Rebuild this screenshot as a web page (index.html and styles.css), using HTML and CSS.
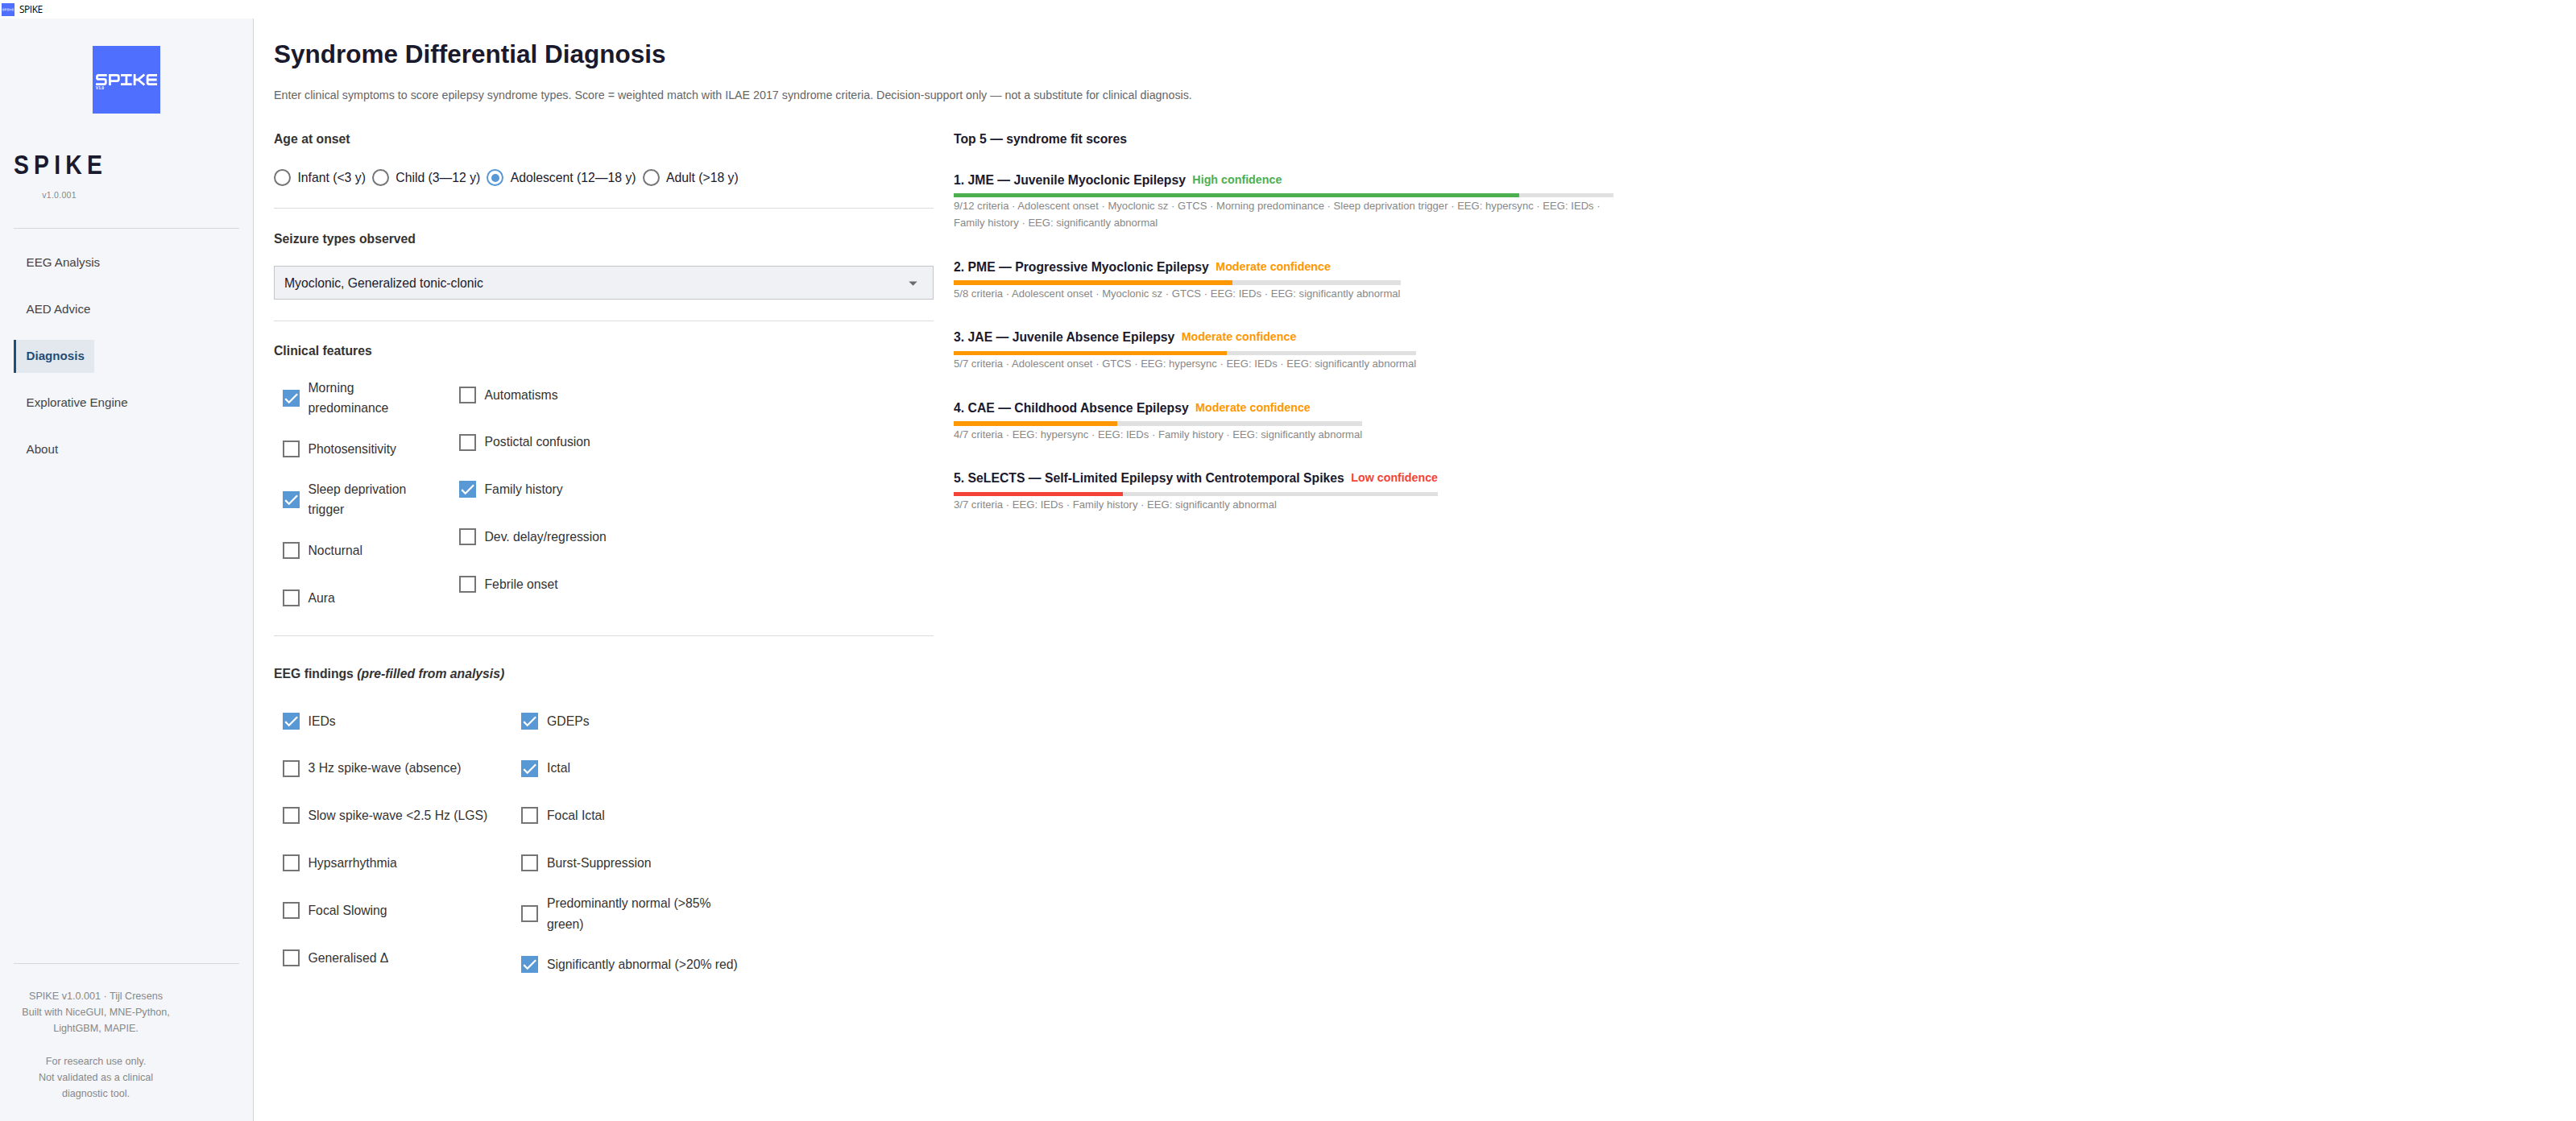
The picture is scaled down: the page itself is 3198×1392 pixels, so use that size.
FILE: index.html
```html
<!DOCTYPE html>
<html lang="en">
<head>
    <meta charset="UTF-8">
    <meta name="viewport" content="width=device-width, initial-scale=1.0">
    <title>SPIKE</title>
    <link rel="stylesheet" href="styles.css">
</head>
<body>

    <div class="titlebar">
        <svg class="titlebar-icon" viewBox="0 0 84 84"><rect width="84" height="84" fill="#4f6fff"/><use href="#wordmark"/></svg>
        <span>SPIKE</span>
    </div>

    <div class="app">
        <aside class="sidebar">
            <svg class="logo" viewBox="0 0 84 84">
                <rect width="84" height="84" fill="#4f6fff"/>
                <g id="wordmark" fill="none" stroke="#fff" stroke-width="2.8">
                    <path d="M17.7 36.4H7.4Q5.4 36.4 5.4 38.4V39.4Q5.4 41.4 7.4 41.4H14.3Q16.3 41.4 16.3 43.4V45.6Q16.3 47.6 14.3 47.6H4"/>
                    <path d="M21.4 49V36.4H30.3Q32.3 36.4 32.3 38.4V41.6Q32.3 43.6 30.3 43.6H21.4"/>
                    <path d="M35 36.4H48.7M41.9 36.4V47.6M35 47.6H48.7"/>
                    <path d="M52.1 35V49M52.1 42H56.5L64.3 35.5M56.5 42L64.3 48.5"/>
                    <path d="M80 36.4H70.1Q68.1 36.4 68.1 38.4V45.6Q68.1 47.6 70.1 47.6H80M68.1 42H79.6"/>
                </g>
                <text class="logo-version" x="3.8" y="54.4">V1.0</text>
            </svg>

            <div class="brand">
                <div class="brand-name">SPIKE</div>
                <div class="brand-version">v1.0.001</div>
            </div>

            <hr>

            <nav class="nav">
                <a class="nav-item">EEG Analysis</a>
                <a class="nav-item">AED Advice</a>
                <a class="nav-item active">Diagnosis</a>
                <a class="nav-item">Explorative Engine</a>
                <a class="nav-item">About</a>
            </nav>

            <div class="sidebar-footer">
                <hr>
                <p>SPIKE v1.0.001 · Tijl Cresens<br>Built with NiceGUI, MNE-Python,<br>LightGBM, MAPIE.<br><br>For research use only.<br>Not validated as a clinical<br>diagnostic tool.</p>
            </div>
        </aside>

        <main class="content">
            <h1>Syndrome Differential Diagnosis</h1>
            <p class="intro">Enter clinical symptoms to score epilepsy syndrome types. Score = weighted match with ILAE 2017 syndrome criteria. Decision-support only — not a substitute for clinical diagnosis.</p>

            <div class="columns">
                <section class="form">
                    <h2>Age at onset</h2>
                    <div class="radios">
                        <label class="radio"><i></i>Infant (&lt;3 y)</label>
                        <label class="radio"><i></i>Child (3—12 y)</label>
                        <label class="radio on"><i></i>Adolescent (12—18 y)</label>
                        <label class="radio"><i></i>Adult (&gt;18 y)</label>
                    </div>
                    <hr>

                    <h2>Seizure types observed</h2>
                    <div class="select">
                        <span>Myoclonic, Generalized tonic-clonic</span>
                        <svg class="arrow" viewBox="0 0 24 24"><path d="M7 10l5 5 5-5z" fill="#6b6b6b"/></svg>
                    </div>
                    <hr>

                    <h2 class="clinical-title">Clinical features</h2>
                    <div class="checks clinical">
                        <div class="check-col">
                            <label class="check on"><i><svg viewBox="0 0 24 24"><path id="tick" d="M1.73 12.91L8.1 19.28 22.79 4.59"/></svg></i><span>Morning<br>predominance</span></label>
                            <label class="check"><i></i><span>Photosensitivity</span></label>
                            <label class="check on"><i><svg viewBox="0 0 24 24"><use href="#tick"/></svg></i><span>Sleep deprivation<br>trigger</span></label>
                            <label class="check"><i></i><span>Nocturnal</span></label>
                            <label class="check"><i></i><span>Aura</span></label>
                        </div>
                        <div class="check-col">
                            <label class="check"><i></i><span>Automatisms</span></label>
                            <label class="check"><i></i><span>Postictal confusion</span></label>
                            <label class="check on"><i><svg viewBox="0 0 24 24"><use href="#tick"/></svg></i><span>Family history</span></label>
                            <label class="check"><i></i><span>Dev. delay/regression</span></label>
                            <label class="check"><i></i><span>Febrile onset</span></label>
                        </div>
                    </div>
                    <hr>

                    <h2 class="eeg-title">EEG findings <em>(pre-filled from analysis)</em></h2>
                    <div class="checks eeg">
                        <div class="check-col">
                            <label class="check on"><i><svg viewBox="0 0 24 24"><use href="#tick"/></svg></i><span>IEDs</span></label>
                            <label class="check"><i></i><span>3 Hz spike-wave (absence)</span></label>
                            <label class="check"><i></i><span>Slow spike-wave &lt;2.5 Hz (LGS)</span></label>
                            <label class="check"><i></i><span>Hypsarrhythmia</span></label>
                            <label class="check"><i></i><span>Focal Slowing</span></label>
                            <label class="check"><i></i><span>Generalised Δ</span></label>
                        </div>
                        <div class="check-col">
                            <label class="check on"><i><svg viewBox="0 0 24 24"><use href="#tick"/></svg></i><span>GDEPs</span></label>
                            <label class="check on"><i><svg viewBox="0 0 24 24"><use href="#tick"/></svg></i><span>Ictal</span></label>
                            <label class="check"><i></i><span>Focal Ictal</span></label>
                            <label class="check"><i></i><span>Burst-Suppression</span></label>
                            <label class="check"><i></i><span>Predominantly normal (&gt;85%<br>green)</span></label>
                            <label class="check on"><i><svg viewBox="0 0 24 24"><use href="#tick"/></svg></i><span>Significantly abnormal (&gt;20% red)</span></label>
                        </div>
                    </div>
                </section>

                <section class="results">
                    <h2>Top 5 — syndrome fit scores</h2>

                    <div class="result full high">
                        <div class="result-head"><b>1. JME — Juvenile Myoclonic Epilepsy</b><span>High confidence</span></div>
                        <div class="bar"><div style="width: 85.7%"></div></div>
                        <p>9/12 criteria · Adolescent onset · Myoclonic sz · GTCS · Morning predominance · Sleep deprivation trigger · EEG: hypersync · EEG: IEDs ·<br>Family history · EEG: significantly abnormal</p>
                    </div>
                    <div class="result moderate">
                        <div class="result-head"><b>2. PME — Progressive Myoclonic Epilepsy</b><span>Moderate confidence</span></div>
                        <div class="bar"><div style="width: 62.4%"></div></div>
                        <p>5/8 criteria · Adolescent onset · Myoclonic sz · GTCS · EEG: IEDs · EEG: significantly abnormal</p>
                    </div>
                    <div class="result moderate">
                        <div class="result-head"><b>3. JAE — Juvenile Absence Epilepsy</b><span>Moderate confidence</span></div>
                        <div class="bar"><div style="width: 59%"></div></div>
                        <p>5/7 criteria · Adolescent onset · GTCS · EEG: hypersync · EEG: IEDs · EEG: significantly abnormal</p>
                    </div>
                    <div class="result moderate">
                        <div class="result-head"><b>4. CAE — Childhood Absence Epilepsy</b><span>Moderate confidence</span></div>
                        <div class="bar"><div style="width: 40%"></div></div>
                        <p>4/7 criteria · EEG: hypersync · EEG: IEDs · Family history · EEG: significantly abnormal</p>
                    </div>
                    <div class="result low">
                        <div class="result-head"><b>5. SeLECTS — Self-Limited Epilepsy with Centrotemporal Spikes</b><span>Low confidence</span></div>
                        <div class="bar"><div style="width: 35%"></div></div>
                        <p>3/7 criteria · EEG: IEDs · Family history · EEG: significantly abnormal</p>
                    </div>
                </section>
            </div>
        </main>
    </div>

</body>
</html>
```

FILE: styles.css
```css
* {
    box-sizing: border-box;
}

body {
    margin: 0;
    height: 100vh;
    display: flex;
    flex-direction: column;
    overflow: hidden;
    font-family: "Liberation Sans", Arial, sans-serif;
    font-size: 15.75px;
    line-height: 25.2px;
    color: #1a1a2e;
    background-color: #fff;
}

h1, h2, p {
    margin: 0;
}

hr {
    width: 100%;
    height: 1px;
    margin: 0;
    border: none;
    background-color: #dcdcdf;
}

.titlebar {
    display: flex;
    align-items: center;
    gap: 6px;
    height: 23px;
    padding-left: 2px;
    font-family: "Open Sans", sans-serif;
    font-size: 12px;
    line-height: 23px;
    letter-spacing: -0.5px;
    color: #000;
}

.titlebar-icon {
    width: 16px;
    height: 16px;
}

.app {
    display: flex;
    flex: 1;
    min-height: 0;
}

/* sidebar */

.sidebar {
    display: flex;
    flex-direction: column;
    flex: none;
    width: 315px;
    padding: 34px 17px 25px;
    background-color: #f4f6fa;
    border-right: 1px solid #d2d5da;
}

.logo {
    flex: none;
    align-self: center;
    width: 84px;
    height: 84px;
}

.logo-version {
    font-family: "Liberation Sans", sans-serif;
    font-size: 5px;
    font-weight: bold;
    fill: #fff;
}

.brand {
    display: flex;
    flex-direction: column;
    align-items: center;
    align-self: flex-start;
    margin-top: 38px;
}

.brand-name {
    font-size: 28.35px;
    font-weight: bold;
    line-height: 50px;
    letter-spacing: 6.2px;
    transform: scaleY(1.15);
}

.brand-version {
    margin-top: 3px;
    padding-right: 3px;
    font-size: 10.5px;
    line-height: 20px;
    letter-spacing: 0.3px;
    color: #888;
}

.sidebar hr {
    flex: none;
    background-color: #d6d8dd;
}

.brand + hr {
    margin-top: 31px;
}

.nav {
    display: flex;
    flex-direction: column;
    align-items: flex-start;
    gap: 16.8px;
    margin-top: 22px;
}

.nav-item {
    padding: 8.4px 12.6px;
    border-left: 3px solid transparent;
    font-size: 15.12px;
    line-height: 24.2px;
    color: #444;
}

.nav-item.active {
    font-weight: bold;
    color: #1f4e79;
    background-color: #e3e8ef;
    border-left-color: #1f4e79;
}

.sidebar-footer {
    margin-top: auto;
}

.sidebar-footer p {
    width: 204px;
    margin-top: 30px;
    margin-bottom: -1px;
    font-size: 12.6px;
    line-height: 20.16px;
    text-align: center;
    color: #888;
}

/* main area */

.content {
    flex: 1;
    padding: 19px 25px 0;
}

h1 {
    font-size: 31.5px;
    line-height: 50px;
}

.intro {
    margin-top: 15px;
    font-size: 14.28px;
    line-height: 22px;
    color: #666;
}

.columns {
    display: flex;
    gap: 25px;
    margin-top: 31px;
}

.form,
.results {
    display: flex;
    flex-direction: column;
    width: 819px;
}

h2 {
    font-size: 15.75px;
    line-height: 25px;
}

.form h2 {
    color: #333;
}

.radios {
    display: flex;
    gap: 8px;
    margin: 23px 0 25px;
}

.radio {
    display: flex;
    align-items: center;
    gap: 8.4px;
}

.radio i {
    width: 21px;
    height: 21px;
    padding: 3.5px;
    border: 2px solid #757575;
    border-radius: 50%;
}

.radio.on i {
    border-color: #5898d4;
    background: #5898d4 content-box;
}

.form hr + h2 {
    margin-top: 25px;
}

.select {
    display: flex;
    align-items: center;
    justify-content: space-between;
    height: 42px;
    margin: 21px 0 26px;
    padding: 0 12px;
    border: 1px solid #c4c6ca;
    background-color: #f0f1f5;
}

.arrow {
    width: 25px;
    height: 25px;
}

.checks {
    display: grid;
    justify-content: start;
    padding-left: 10.5px;
}

.form .clinical-title {
    margin-top: 24px;
}

.clinical {
    grid-template-columns: 219px auto;
    margin: 21px 0 26px;
}

.form .eeg-title {
    margin-top: 34px;
}

.eeg {
    grid-template-columns: 296.5px auto;
    margin-top: 25px;
}

.check-col {
    display: flex;
    flex-direction: column;
    gap: 16.8px;
}

.check {
    display: flex;
    align-items: center;
    gap: 11px;
    min-height: 42px;
    color: #333;
}

.check i {
    width: 21px;
    height: 21px;
    border: 2px solid #757575;
}

.check.on i {
    border-color: #5898d4;
    background-color: #5898d4;
}

.check svg {
    display: block;
    width: 17px;
    height: 17px;
    fill: none;
    stroke: #fff;
    stroke-width: 3.12px;
}

/* results */

.results h2 {
    margin-bottom: 25.7px;
}

.result {
    align-self: flex-start;
    margin-bottom: 31.75px;
}

.result.full {
    width: 100%;
}

.result-head {
    display: flex;
    align-items: center;
    gap: 8.4px;
    margin-bottom: 4.2px;
}

.result-head span {
    font-size: 14.28px;
    font-weight: bold;
}

.bar {
    height: 5.25px;
    background-color: #e0e0e0;
}

.bar div {
    height: 100%;
}

.result p {
    font-size: 13.1px;
    line-height: 21px;
    color: #888;
    white-space: nowrap;
}

.high span {
    color: #4caf50;
}

.high .bar div {
    background-color: #4caf50;
}

.moderate span {
    color: #ff9800;
}

.moderate .bar div {
    background-color: #ff9800;
}

.low span {
    color: #f44336;
}

.low .bar div {
    background-color: #f44336;
}
```
